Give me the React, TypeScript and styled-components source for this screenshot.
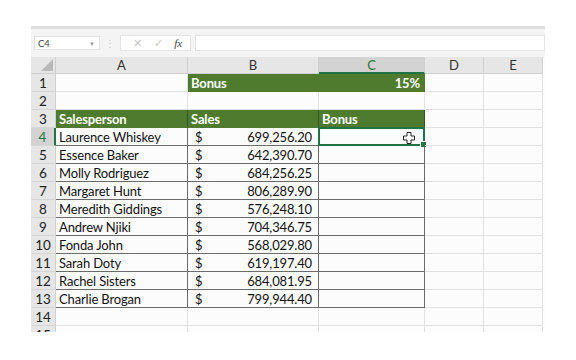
import React from "react";
import styled, { createGlobalStyle, css } from "styled-components";

const GlobalStyle = createGlobalStyle`
  body {
    margin: 0;
    background: #ffffff;
    font-family: "Lato", "Liberation Sans", sans-serif;
  }
`;

const green = "#4f7b2f";
const selGreen = "#217346";
const grid = "#e2e2e2";
const tableLine = "#6b6b6b";

const Window = styled.div`
  margin: 26px 0 0 31px;
  width: 514px;
  height: 306px;
  overflow: hidden;
  background: #fdfcfd;
`;

const TopStrip = styled.div`
  height: 3px;
  background: #dedede;
`;

const FormulaBar = styled.div`
  height: 28px;
  display: flex;
  align-items: center;
  padding-left: 3px;
  background: #f4f4f4;
  box-sizing: border-box;
`;

const NameBox = styled.div`
  width: 66px;
  height: 14px;
  box-sizing: border-box;
  border: 1px solid #e3e3e3;
  background: #ffffff;
  display: flex;
  align-items: center;
  justify-content: space-between;
  padding: 0 4px 0 3px;
  font-size: 9.5px;
  color: #444;
`;

const Caret = styled.span`
  font-size: 6px;
  color: #999;
`;

const Dots = styled.span`
  width: 20px;
  text-align: center;
  font-size: 10px;
  color: #c8c8c8;
`;

const IconBox = styled.div`
  width: 71px;
  height: 16px;
  box-sizing: border-box;
  border: 1px solid #e3e3e3;
  background: #ffffff;
  display: flex;
  align-items: center;
  justify-content: space-around;
  padding: 0 2px 0 6px;
  color: #c4c4c4;
  font-size: 11px;
`;

const Fx = styled.span`
  font-family: "Liberation Serif", serif;
  font-style: italic;
  font-size: 11px;
  color: #444;
`;

const FormulaInput = styled.div`
  flex: 1;
  margin-left: 4px;
  height: 16px;
  box-sizing: border-box;
  border: 1px solid #e3e3e3;
  background: #ffffff;
`;

const Sheet = styled.div`
  display: grid;
  grid-template-columns: 25px 132px 131px 106px 59px 59px;
  grid-template-rows: 17px;
  grid-auto-rows: 18px;
  font-size: 13px;
  letter-spacing: -0.15px;
`;

const Corner = styled.div`
  position: relative;
  background: #e6e6e6;
  border-right: 1px solid #cfcfcf;
  border-bottom: 1px solid #cfcfcf;
  box-sizing: border-box;
  &::after {
    content: "";
    position: absolute;
    right: 2px;
    bottom: 2px;
    border-left: 12px solid transparent;
    border-bottom: 12px solid #b9b9b9;
  }
`;

const ColHead = styled.div<{ $active?: boolean }>`
  box-sizing: border-box;
  background: ${(p) => (p.$active ? "#d3d3d3" : "#e6e6e6")};
  border-right: 1px solid #cfcfcf;
  border-bottom: ${(p) => (p.$active ? `2px solid ${selGreen}` : "1px solid #cfcfcf")};
  color: ${(p) => (p.$active ? selGreen : "#333")};
  font-size: 13px;
  letter-spacing: 0;
  display: flex;
  align-items: center;
  justify-content: center;
`;

const RowHead = styled.div<{ $active?: boolean }>`
  box-sizing: border-box;
  background: ${(p) => (p.$active ? "#d3d3d3" : "#e6e6e6")};
  border-right: ${(p) => (p.$active ? `2px solid ${selGreen}` : "1px solid #cfcfcf")};
  border-bottom: 1px solid #d6d6d6;
  color: ${(p) => (p.$active ? selGreen : "#222")};
  font-size: 13.5px;
  letter-spacing: 0;
  display: flex;
  align-items: center;
  justify-content: center;
`;

const Cell = styled.div<{
  $fill?: boolean;
  $table?: boolean;
  $align?: "left" | "right";
  $split?: boolean;
  $divider?: boolean;
}>`
  position: relative;
  box-sizing: border-box;
  padding: 0 4px 0 3px;
  display: flex;
  align-items: center;
  justify-content: ${(p) =>
    p.$split ? "space-between" : p.$align === "right" ? "flex-end" : "flex-start"};
  white-space: nowrap;
  color: #111;
  border-right: 1px solid ${grid};
  border-bottom: 1px solid ${grid};
  ${(p) =>
    p.$table &&
    css`
      border-right: 1px solid ${tableLine};
      border-bottom: 1px solid ${tableLine};
    `}
  ${(p) =>
    p.$fill &&
    css`
      background: ${green};
      color: #ffffff;
      font-weight: 700;
      border-right-color: ${p.$divider ? "#34561f" : green};
      border-bottom-color: ${green};
    `}
`;

const Dollar = styled.span`
  padding-left: 4px;
`;

const Amount = styled.span`
  padding-right: 2px;
`;

const Selection = styled.div`
  position: absolute;
  left: -1px;
  top: -1px;
  right: -1px;
  bottom: -1px;
  border: 2px solid ${selGreen};
  pointer-events: none;
  &::after {
    content: "";
    position: absolute;
    right: -4px;
    bottom: -4px;
    width: 5px;
    height: 5px;
    background: ${selGreen};
    border: 1px solid #ffffff;
  }
`;

const Cursor = styled.svg`
  position: absolute;
  right: 9px;
  top: 4px;
`;

const rows = [
  ["Laurence Whiskey", "699,256.20"],
  ["Essence Baker", "642,390.70"],
  ["Molly Rodriguez", "684,256.25"],
  ["Margaret Hunt", "806,289.90"],
  ["Meredith Giddings", "576,248.10"],
  ["Andrew Njiki", "704,346.75"],
  ["Fonda John", "568,029.80"],
  ["Sarah Doty", "619,197.40"],
  ["Rachel Sisters", "684,081.95"],
  ["Charlie Brogan", "799,944.40"],
];

function Blank({ n }: { n: number }) {
  return (
    <>
      <RowHead>{n}</RowHead>
      <Cell />
      <Cell />
      <Cell />
      <Cell />
      <Cell />
    </>
  );
}

export default function App() {
  return (
    <>
      <GlobalStyle />
      <Window>
        <TopStrip />
        <FormulaBar>
          <NameBox>
            <span>C4</span>
            <Caret>▼</Caret>
          </NameBox>
          <Dots>⋮</Dots>
          <IconBox>
            <span>✕</span>
            <span>✓</span>
            <Fx>fx</Fx>
          </IconBox>
          <FormulaInput />
        </FormulaBar>
        <Sheet>
          <Corner />
          <ColHead>A</ColHead>
          <ColHead>B</ColHead>
          <ColHead $active>C</ColHead>
          <ColHead>D</ColHead>
          <ColHead>E</ColHead>

          <RowHead>1</RowHead>
          <Cell />
          <Cell $fill>Bonus</Cell>
          <Cell $fill $align="right">
            15%
          </Cell>
          <Cell />
          <Cell />

          <Blank n={2} />

          <RowHead>3</RowHead>
          <Cell $fill $divider>
            Salesperson
          </Cell>
          <Cell $fill $divider>
            Sales
          </Cell>
          <Cell $fill $divider>
            Bonus
          </Cell>
          <Cell />
          <Cell />

          {rows.map(([name, amount], i) => (
            <React.Fragment key={name}>
              <RowHead $active={i === 0}>{i + 4}</RowHead>
              <Cell $table>{name}</Cell>
              <Cell $table $split>
                <Dollar>$</Dollar>
                <Amount>{amount}</Amount>
              </Cell>
              <Cell $table>
                {i === 0 && (
                  <>
                    <Selection />
                    <Cursor width="12" height="12" viewBox="0 0 12 12">
                      <path
                        d="M4 0.5h4v3.5h3.5v4h-3.5v3.5h-4v-3.5h-3.5v-4h3.5z"
                        fill="#ffffff"
                        stroke="#222"
                        strokeWidth="1"
                      />
                    </Cursor>
                  </>
                )}
              </Cell>
              <Cell />
              <Cell />
            </React.Fragment>
          ))}

          <Blank n={14} />
          <Blank n={15} />
        </Sheet>
      </Window>
    </>
  );
}
